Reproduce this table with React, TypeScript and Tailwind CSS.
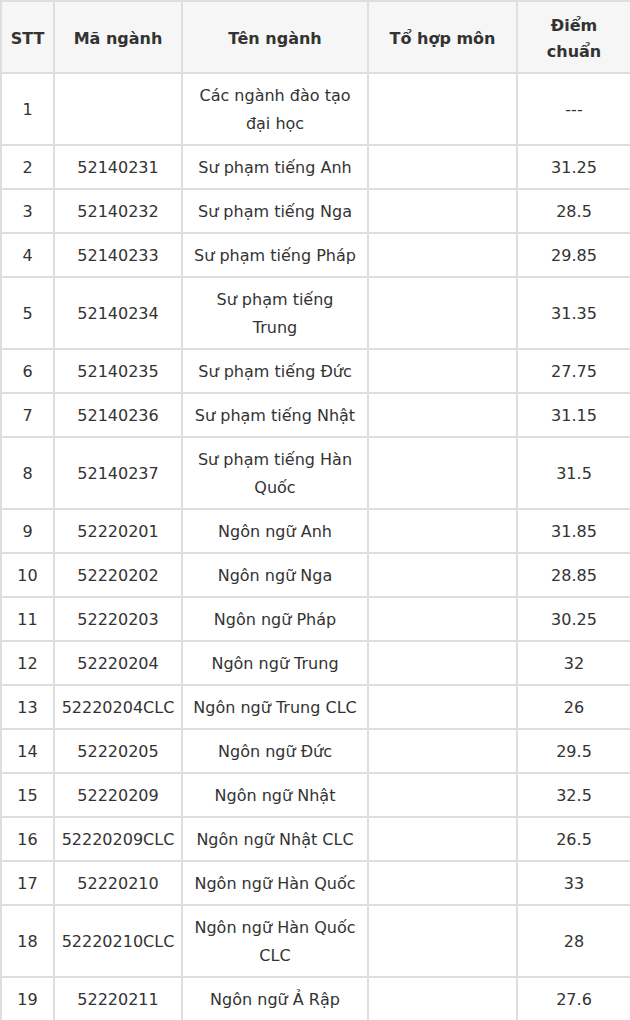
const rows: { stt: number; code: string; name: string; score: string }[] = [
  { stt: 1, code: "", name: "Các ngành đào tạo đại học", score: "---" },
  { stt: 2, code: "52140231", name: "Sư phạm tiếng Anh", score: "31.25" },
  { stt: 3, code: "52140232", name: "Sư phạm tiếng Nga", score: "28.5" },
  { stt: 4, code: "52140233", name: "Sư phạm tiếng Pháp", score: "29.85" },
  { stt: 5, code: "52140234", name: "Sư phạm tiếng Trung", score: "31.35" },
  { stt: 6, code: "52140235", name: "Sư phạm tiếng Đức", score: "27.75" },
  { stt: 7, code: "52140236", name: "Sư phạm tiếng Nhật", score: "31.15" },
  { stt: 8, code: "52140237", name: "Sư phạm tiếng Hàn Quốc", score: "31.5" },
  { stt: 9, code: "52220201", name: "Ngôn ngữ Anh", score: "31.85" },
  { stt: 10, code: "52220202", name: "Ngôn ngữ Nga", score: "28.85" },
  { stt: 11, code: "52220203", name: "Ngôn ngữ Pháp", score: "30.25" },
  { stt: 12, code: "52220204", name: "Ngôn ngữ Trung", score: "32" },
  { stt: 13, code: "52220204CLC", name: "Ngôn ngữ Trung CLC", score: "26" },
  { stt: 14, code: "52220205", name: "Ngôn ngữ Đức", score: "29.5" },
  { stt: 15, code: "52220209", name: "Ngôn ngữ Nhật", score: "32.5" },
  { stt: 16, code: "52220209CLC", name: "Ngôn ngữ Nhật CLC", score: "26.5" },
  { stt: 17, code: "52220210", name: "Ngôn ngữ Hàn Quốc", score: "33" },
  { stt: 18, code: "52220210CLC", name: "Ngôn ngữ Hàn Quốc CLC", score: "28" },
  { stt: 19, code: "52220211", name: "Ngôn ngữ Ả Rập", score: "27.6" },
];

export default function App() {
  const cell = "border-2 border-[#dedede] pt-[8px] pb-[6px] text-center align-middle";
  const head = "border-2 border-[#dedede] px-1 pt-[11px] pb-[7px] text-center";
  return (
    <div className="w-[630px] h-[1020px] overflow-hidden bg-white text-[#333] text-[16px] leading-[28px] font-['DejaVu_Sans',sans-serif]">
      <table className="w-[630px] table-fixed border-collapse">
        <colgroup>
          <col className="w-[53px]" />
          <col className="w-[128px]" />
          <col className="w-[186px]" />
          <col className="w-[149px]" />
          <col className="w-[114px]" />
        </colgroup>
        <thead>
          <tr className="bg-[#f6f6f6] font-bold leading-[26px]">
            <th className={head}>STT</th>
            <th className={head}>Mã ngành</th>
            <th className={head}>Tên ngành</th>
            <th className={head}>Tổ hợp môn</th>
            <th className={head}>
              Điểm
              <br />
              chuẩn
            </th>
          </tr>
        </thead>
        <tbody>
          {rows.map((r) => (
            <tr key={r.stt}>
              <td className={`${cell} px-[6px]`}>{r.stt}</td>
              <td className={`${cell} px-0`}>{r.code}</td>
              <td className={`${cell} px-[9.5px]`}>{r.name}</td>
              <td className={`${cell} px-[6px]`}></td>
              <td className={`${cell} px-[6px]`}>{r.score}</td>
            </tr>
          ))}
        </tbody>
      </table>
    </div>
  );
}
